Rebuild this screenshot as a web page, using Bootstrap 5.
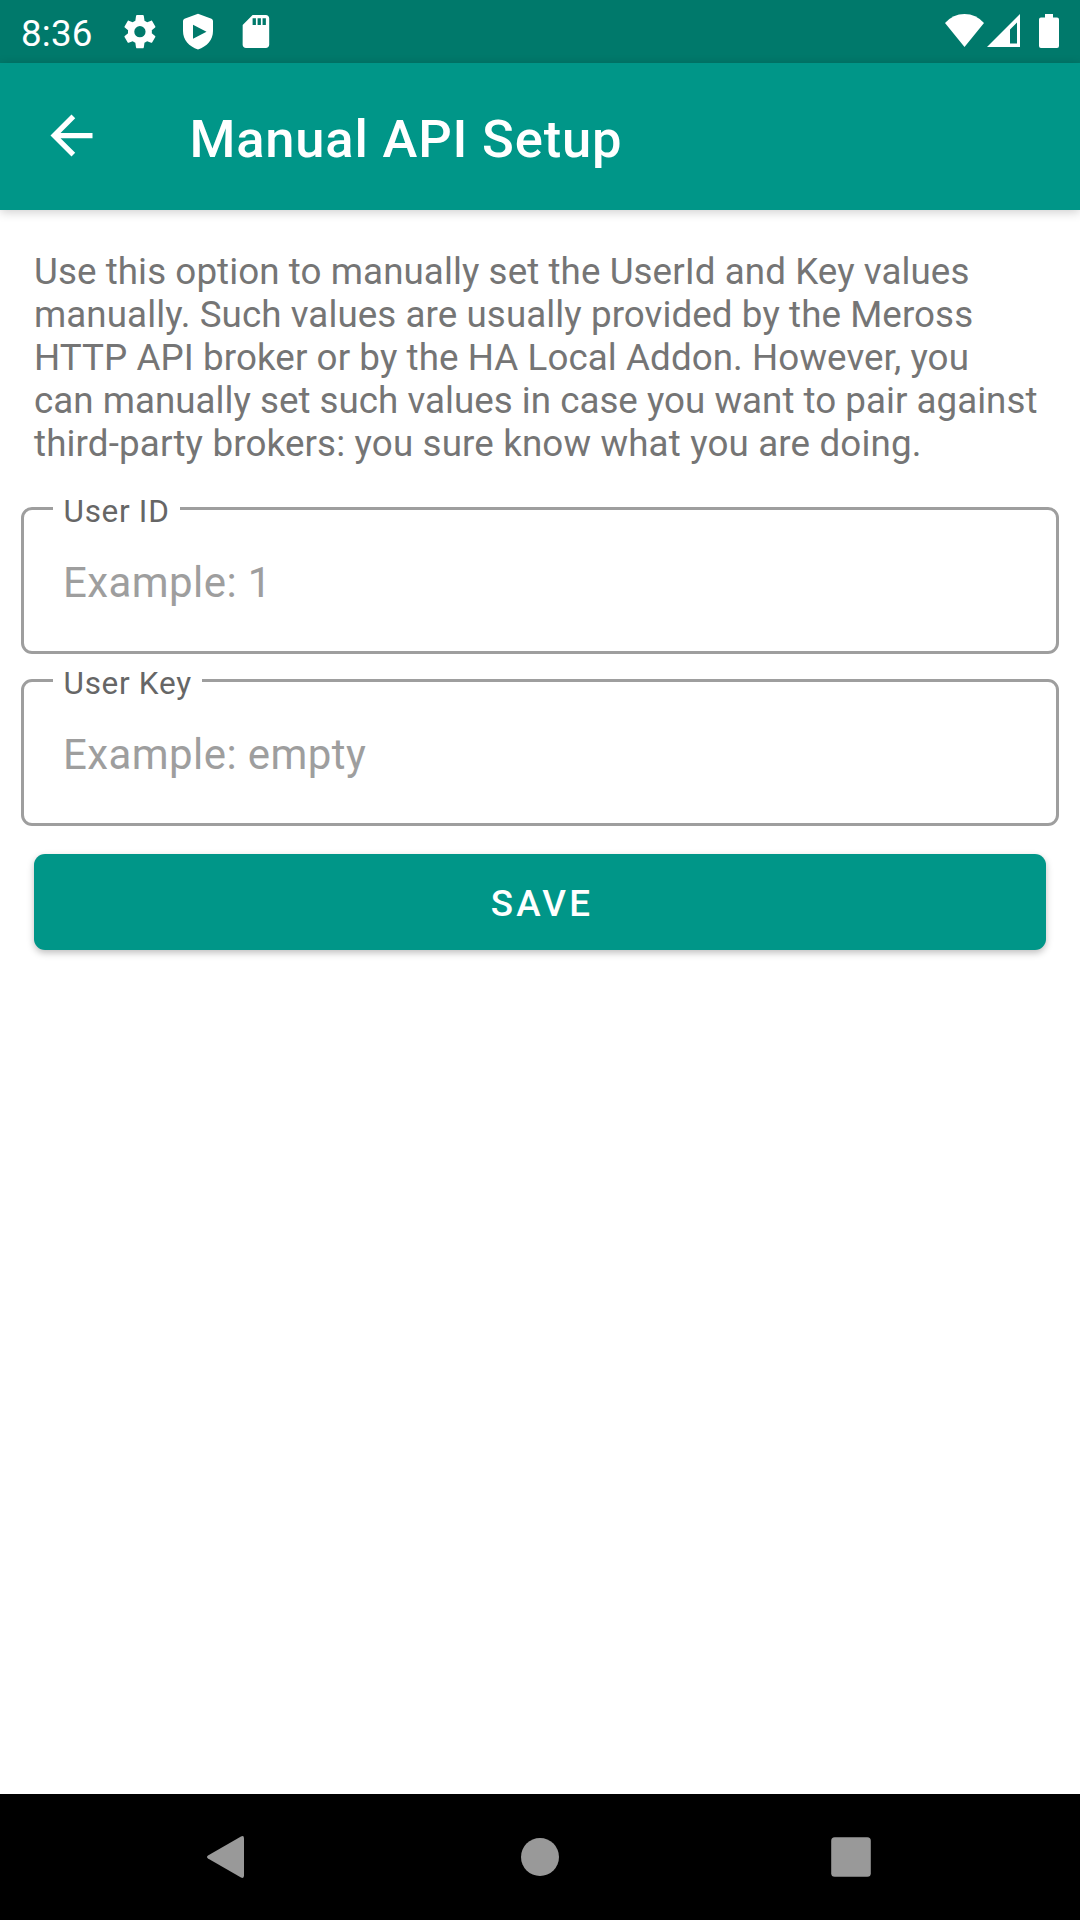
<!DOCTYPE html>
<html lang="en">
<head>
<meta charset="utf-8">
<meta name="viewport" content="width=device-width, initial-scale=1">
<title>Manual API Setup</title>
<link href="https://cdn.jsdelivr.net/npm/bootstrap@5.3.0/dist/css/bootstrap.min.css" rel="stylesheet">
<style>
  body { font-family: Roboto, "Noto Sans", sans-serif; background: #fff; }
  .screen { height: 1920px; width: 1080px; overflow: hidden; }
  .status-bar { height: 63px; background: #00796b; padding: 0 21px; font-size: 36.75px; line-height: 63px; }
  .clock { width: 97px; padding-top: 3px; letter-spacing: .2px; }
  .status-bar svg, .app-bar svg { display: block; flex: none; }
  .app-bar { height: 147px; background: #009688; padding: 0 39.6px; box-shadow: 0 2px 10px rgba(0,0,0,.2); position: relative; }
  .app-bar svg { margin-bottom: 2px; }
  .app-title { font-size: 52.5px; font-weight: 500; line-height: 62px; margin: 4px 0 0 86.8px; letter-spacing: .83px; }
  .intro { margin: 40px 34px 42px; font-size: 36.75px; line-height: 43px; letter-spacing: .075px; color: #757575; white-space: nowrap; }
  .intro .snug { letter-spacing: .01px; }
  .intro .loose { letter-spacing: .14px; }
  .outlined { margin: 0 21px 25px; height: 147px; }
  .outlined .form-control { height: 147px; border: 3px solid #9e9e9e; border-radius: 11px; padding: 4px 39px 0; font-size: 42px; letter-spacing: .42px; background: #fff; }
  .outlined .form-control::placeholder { color: #9e9e9e; opacity: 1; }
  .outlined label { top: -14px; left: 32px; padding: 0 10px 0 10.5px; background: #fff; color: #666; font-size: 31.5px; line-height: 38px; letter-spacing: .7px; }
  .save { margin: 3px 34px 0; height: 96px; border: 0; border-radius: 11px; background: #009688; color: #fff; font-size: 36.75px; font-weight: 500; letter-spacing: .0893em; box-shadow: 0 3px 7px rgba(0,0,0,.25); padding: 4px 0 0 4px; }
  .nav-keys { height: 126px; background: #000; padding: 0 168px 0 167px; }
  .nav-keys svg { fill: #999; display: block; }
</style>
</head>
<body>
<div class="screen d-flex flex-column">
  <header class="status-bar d-flex align-items-center text-white">
    <div class="clock">8:36</div>
    <svg width="250" height="63" viewBox="118 0 250 63" fill="#fff">
      <path transform="translate(120 11.8) scale(1.66)" d="M19.14 12.94c.04-.3.06-.61.06-.94s-.02-.64-.07-.94l2.03-1.58c.18-.14.23-.41.12-.61l-1.92-3.32c-.12-.22-.37-.29-.59-.22l-2.39.96c-.5-.38-1.03-.7-1.62-.94L14.4 2.81c-.04-.24-.24-.81-.48-.81h-3.84c-.24 0-.43.57-.47.81l-.36 2.54c-.59.24-1.13.57-1.62.94l-2.39-.96c-.22-.08-.47 0-.59.22L2.74 8.87c-.12.21-.08.47.12.61l2.03 1.58c-.05.3-.09.63-.09.94s.02.64.07.94l-2.03 1.58c-.18.14-.23.41-.12.61l1.92 3.32c.12.22.37.29.59.22l2.39-.96c.5.38 1.03.7 1.62.94l.36 2.54c.05.24.24.81.48.81h3.84c.24 0 .44-.57.47-.81l.36-2.54c.59-.24 1.13-.56 1.62-.94l2.39.96c.22.08.47 0 .59-.22l1.92-3.32c.12-.22.07-.47-.12-.61l-2.01-1.58zM12 15.4a3.4 3.4 0 1 1 0-6.8 3.4 3.4 0 0 1 0 6.8z"/>
      <path fill-rule="evenodd" d="M198 13.7 211.500 18.700Q213 19.400 213 21V31C213 40 207 46.500 198 49.500C189 46.500 183 40 183 31V21Q183 19.400 184.500 18.700ZM193 24.700V38.700L206.500 31.700Z"/>
      <path transform="translate(236 11.6) scale(1.66)" d="M18 2h-8L4.020 8 4 20c0 1.100.9 2 2 2h12c1.100 0 2-.9 2-2V4c0-1.100-.9-2-2-2zm-6 6h-2V4h2v4zm3 0h-2V4h2v4zm3 0h-2V4h2v4z"/>
    </svg>
    <svg class="ms-auto" width="117" height="63" viewBox="942 0 117 63" fill="#fff">
      <path d="M945 23Q953 14 964.500 14Q976 14 984 23L964.500 47Z"/>
      <path fill-rule="evenodd" d="M1020 14V47H987ZM1017 22.500 1010 29.500V43.500H1017Z"/>
      <path d="M1045 14H1053V17.500H1057Q1059 17.500 1059 19.500V46Q1059 48 1057 48H1041Q1039 48 1039 46V19.500Q1039 17.500 1041 17.500H1045Z"/>
    </svg>
  </header>
  <nav class="app-bar d-flex align-items-center text-white">
    <svg width="63" height="63" viewBox="0 0 24 24" fill="#fff"><path d="M20 11H7.830l5.590-5.590L12 4l-8 8 8 8 1.410-1.410L7.830 13H20v-2z"/></svg>
    <h1 class="app-title">Manual API Setup</h1>
  </nav>
  <main class="flex-grow-1 d-flex flex-column">
    <p class="intro">Use this option to manually set the UserId and Key values<br>manually. Such values are usually provided by the Meross<br>HTTP API broker or by the HA Local Addon. However, you<br><span class="snug">can manually set such values in case you want to pair against</span><br><span class="loose">third-party brokers: you sure know what you are doing.</span></p>
    <div class="outlined position-relative">
      <input id="userId" class="form-control" type="text" placeholder="Example: 1">
      <label for="userId" class="position-absolute">User ID</label>
    </div>
    <div class="outlined position-relative">
      <input id="userKey" class="form-control" type="text" placeholder="Example: empty">
      <label for="userKey" class="position-absolute">User Key</label>
    </div>
    <button class="btn save" type="button">SAVE</button>
  </main>
  <footer class="nav-keys d-flex align-items-center justify-content-between">
    <svg width="120" height="126" viewBox="167 1794 120 126"><path d="M241 1836.500Q244 1835 244 1838.500V1875.500Q244 1879 241 1877.500L208 1858.500Q206 1857 208 1855.500Z"/></svg>
    <svg width="40" height="126" viewBox="520 1794 40 126"><circle cx="540" cy="1857" r="19"/></svg>
    <svg width="120" height="126" viewBox="792 1794 120 126"><rect x="831.200" y="1837.200" width="39.600" height="39.600" rx="3.500"/></svg>
  </footer>
</div>
<script src="https://cdn.jsdelivr.net/npm/bootstrap@5.3.0/dist/js/bootstrap.bundle.min.js"></script>
</body>
</html>
